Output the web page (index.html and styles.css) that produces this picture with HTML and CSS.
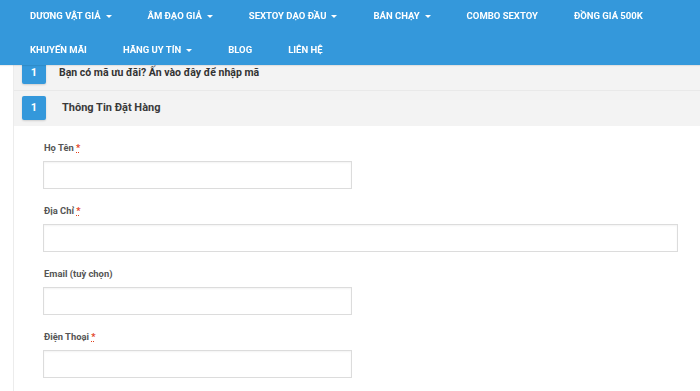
FILE: index.html
```html
<!DOCTYPE html>
<html lang="vi">
<head>
<meta charset="utf-8">
<link rel="stylesheet" href="styles.css">
</head>
<body>
<header class="nav">
  <ul class="menu">
    <li>DƯƠNG VẬT GIẢ<span class="caret"></span></li>
    <li>ÂM ĐẠO GIẢ<span class="caret"></span></li>
    <li>SEXTOY DẠO ĐẦU<span class="caret"></span></li>
    <li>BÁN CHẠY<span class="caret"></span></li>
    <li>COMBO SEXTOY</li>
    <li>ĐỒNG GIÁ 500K</li>
    <li class="break"></li>
    <li>KHUYẾN MÃI</li>
    <li>HÃNG UY TÍN<span class="caret"></span></li>
    <li>BLOG</li>
    <li>LIÊN HỆ</li>
  </ul>
</header>
<main class="checkout">
  <div class="step step-coupon"><span class="badge">1</span><span class="step-text">Bạn có mã ưu đãi? Ấn vào đây để nhập mã</span></div>
  <div class="step step-info"><span class="badge">1</span><span class="step-text">Thông Tin Đặt Hàng</span></div>
  <form class="form">
    <div class="field">
      <label>Họ Tên <abbr class="req">*</abbr></label>
      <input class="input short" type="text">
    </div>
    <div class="field">
      <label>Địa Chỉ <abbr class="req">*</abbr></label>
      <input class="input full" type="text">
    </div>
    <div class="field">
      <label>Email (tuỳ chọn)</label>
      <input class="input short" type="text">
    </div>
    <div class="field">
      <label>Điện Thoại <abbr class="req">*</abbr></label>
      <input class="input short" type="text">
    </div>
  </form>
</main>
</body>
</html>
```
FILE: styles.css
```css
* { box-sizing: border-box; }
html, body { margin: 0; padding: 0; }
body {
  background: #fff;
  font-family: Roboto, "Liberation Sans", Arial, sans-serif;
  color: #333;
  overflow: hidden;
}
.nav {
  position: fixed;
  top: 0; left: 0; right: 0;
  height: 65px;
  background: #3498db;
  z-index: 10;
  box-shadow: 0 1px 1px rgba(0,0,0,0.08);
}
.menu {
  list-style: none;
  margin: 0;
  padding: 0 0 0 12px;
  display: flex;
  flex-wrap: wrap;
  width: 700px;
}
.menu li {
  color: #fff;
  font-weight: 700;
  font-size: 9.5px;
  line-height: 32px;
  height: 32px;
  padding: 0 18px;
  white-space: nowrap;
  display: flex;
  align-items: center;
}
.menu li:first-child { margin-top: 0; }
.menu li.break { flex-basis: 100%; height: 0; padding: 0; }
.menu li:nth-child(n+8) { height: 33px; margin-top: 1px; }
.caret {
  display: inline-block;
  width: 0; height: 0;
  border-left: 3px solid transparent;
  border-right: 3px solid transparent;
  border-top: 3px solid #fff;
  margin-left: 5px;
  margin-top: 1px;
}
.checkout {
  margin-left: 13px;
  padding-top: 56px;
  border-left: 1px solid #ececec;
  min-height: 391px;
}
.step {
  background: #f3f3f3;
  display: flex;
  align-items: center;
  padding: 4px 8px 6px;
  border-bottom: 1px solid #e9e9e9;
}
.step-info { height: 35px; border-bottom: none; }
.badge {
  width: 24px;
  height: 24px;
  background: #3498db;
  color: #fff;
  font-weight: 700;
  font-size: 11px;
  display: flex;
  align-items: center;
  justify-content: center;
  border-radius: 2px;
  box-shadow: 0 1px 2px rgba(0,0,0,0.15);
}
.step-text {
  font-weight: 700;
  color: #333;
}
.step-coupon .step-text { font-size: 10.5px; margin-left: 13px; }
.step-info .step-text { font-size: 11px; margin-left: 16px; color: #3a3a3a; }
.form {
  padding: 14px 22px 0 29px;
}
.field { margin-bottom: 14px; }
.field label {
  display: block;
  font-size: 9.4px;
  font-weight: 700;
  color: #555;
  line-height: 16px;
  margin: 0 0 5px 1px;
}
.req {
  color: #e2401c;
  text-decoration: underline dotted;
  border: none;
}
.input {
  display: block;
  height: 28px;
  border: 1px solid #dcdcdc;
  background: #fff;
  box-shadow: inset 0 1px 2px rgba(0,0,0,0.05);
  border-radius: 0;
  margin: 0;
}
.short { width: 309px; }
.full { width: 635px; }
```
